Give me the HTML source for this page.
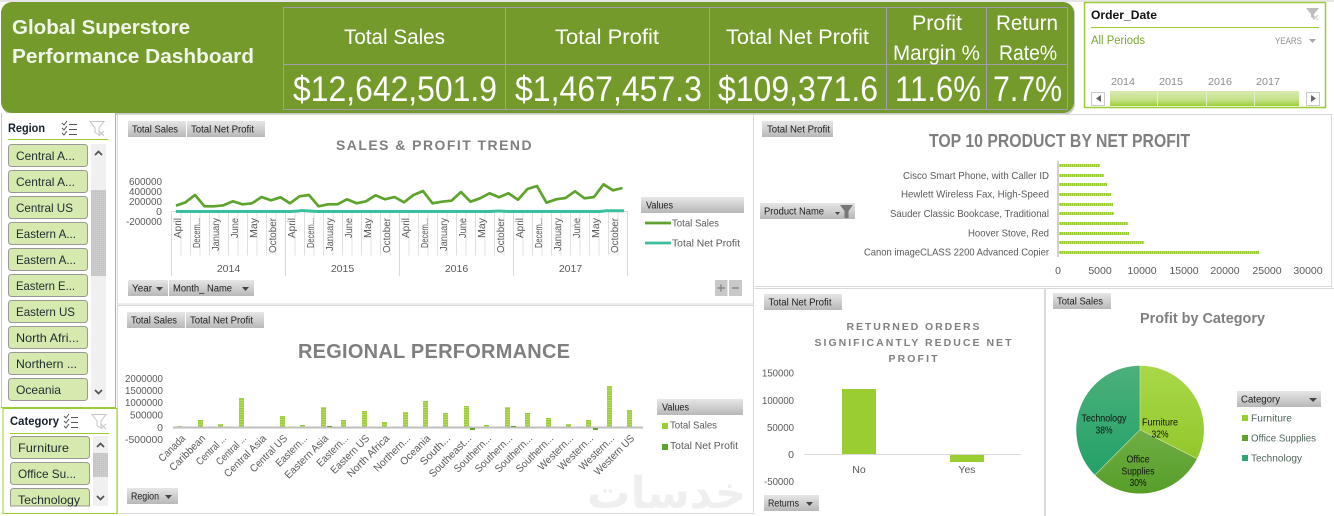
<!DOCTYPE html>
<html lang="en">
<head>
<meta charset="utf-8">
<title>Global Superstore Performance Dashboard</title>
<style>
html,body{margin:0;padding:0;background:#fff;width:1334px;height:516px;overflow:hidden}
svg{display:block;font-family:"Liberation Sans",sans-serif}
.tag{font-size:10px;fill:#1c1c1c}
.ax{font-size:10.5px;fill:#595959}
.sl{font-size:12px;fill:#1f2a30}
.kh{font-size:21px;fill:#fff}
.kv{font-size:35px;fill:#fff}
.ti{font-weight:bold;fill:#7f7f7f}
</style>
</head>
<body>
<svg width="1334" height="516" viewBox="0 0 1334 516" xmlns="http://www.w3.org/2000/svg">
<defs>
<linearGradient id="tg" x1="0" y1="0" x2="0" y2="1"><stop offset="0" stop-color="#e6e6e6"/><stop offset="1" stop-color="#b8b8b8"/></linearGradient>
<linearGradient id="tl" x1="0" y1="0" x2="0" y2="1"><stop offset="0" stop-color="#d8ebb0"/><stop offset="0.6" stop-color="#c4e18a"/><stop offset="1" stop-color="#9acd32"/></linearGradient>
<linearGradient id="pf" x1="0" y1="0" x2="0" y2="1"><stop offset="0" stop-color="#a8d848"/><stop offset="1" stop-color="#93c82c"/></linearGradient>
<linearGradient id="po" x1="0" y1="0" x2="0" y2="1"><stop offset="0" stop-color="#6fae45"/><stop offset="1" stop-color="#579e28"/></linearGradient>
<linearGradient id="pt" x1="0" y1="0" x2="0" y2="1"><stop offset="0" stop-color="#4cb07c"/><stop offset="1" stop-color="#23a167"/></linearGradient>
<pattern id="st" width="5" height="2.4" patternUnits="userSpaceOnUse"><rect width="5" height="2.4" fill="#bcdf72"/><rect width="5" height="1.4" fill="#98cb30"/></pattern>
<pattern id="vs" width="2" height="3" patternUnits="userSpaceOnUse"><rect width="2" height="3" fill="#c4e282"/><rect width="1.2" height="3" fill="#98cb30"/></pattern>
<pattern id="dt" width="2" height="2" patternUnits="userSpaceOnUse"><rect width="2" height="2" fill="#c6c6c6"/><rect width="1" height="1" fill="#d2d2d2"/></pattern>
</defs>

<rect x="0" y="0" width="1334" height="2" fill="#e6e6e6"/>

<!-- header -->
<rect x="2" y="3" width="1073" height="112" rx="11" fill="#c8c8c8"/>
<rect x="1" y="2" width="1073" height="111" rx="11" fill="#739a2a"/>
<text x="12" y="34" font-size="20.5" font-weight="bold" fill="#f2f5ea" textLength="178" lengthAdjust="spacingAndGlyphs">Global Superstore</text>
<text x="12" y="63" font-size="20.5" font-weight="bold" fill="#f2f5ea" textLength="242" lengthAdjust="spacingAndGlyphs">Performance Dashboard</text>
<g fill="none" stroke="#a29dab" stroke-width="1">
<rect x="283.5" y="7.5" width="784" height="102"/>
<path d="M283.5 64.5H1067.5M505.5 7.5V109.5M709.5 7.5V109.5M886.5 7.5V109.5M986.5 7.5V109.5"/>
</g>
<text class="kh" x="344" y="44" textLength="101" lengthAdjust="spacingAndGlyphs">Total Sales</text>
<text class="kh" x="555" y="44" textLength="104" lengthAdjust="spacingAndGlyphs">Total Profit</text>
<text class="kh" x="726" y="44" textLength="143" lengthAdjust="spacingAndGlyphs">Total Net Profit</text>
<text class="kh" x="912" y="30" textLength="50" lengthAdjust="spacingAndGlyphs">Profit</text>
<text class="kh" x="893" y="60" textLength="87" lengthAdjust="spacingAndGlyphs">Margin %</text>
<text class="kh" x="996" y="30" textLength="62" lengthAdjust="spacingAndGlyphs">Return</text>
<text class="kh" x="999" y="60" textLength="58" lengthAdjust="spacingAndGlyphs">Rate%</text>
<text class="kv" x="293" y="101" textLength="204" lengthAdjust="spacingAndGlyphs">$12,642,501.9</text>
<text class="kv" x="515" y="101" textLength="187" lengthAdjust="spacingAndGlyphs">$1,467,457.3</text>
<text class="kv" x="718" y="101" textLength="160" lengthAdjust="spacingAndGlyphs">$109,371.6</text>
<text class="kv" x="895" y="101" textLength="86" lengthAdjust="spacingAndGlyphs">11.6%</text>
<text class="kv" x="993" y="101" textLength="69" lengthAdjust="spacingAndGlyphs">7.7%</text>

<!-- timeline -->
<rect x="1084.5" y="2.5" width="241" height="105" fill="#fff" stroke="#9acd32" stroke-width="1.5"/>
<text x="1091" y="19" font-size="12" font-weight="bold" fill="#111" textLength="66" lengthAdjust="spacingAndGlyphs">Order_Date</text>
<path d="M1091 27.5H1319" stroke="#9acd32" stroke-width="1"/>
<text x="1091" y="44" font-size="11.5" fill="#7aa62c" textLength="54" lengthAdjust="spacingAndGlyphs">All Periods</text>
<text x="1275" y="44" font-size="9.5" fill="#8c8c8c" textLength="27" lengthAdjust="spacingAndGlyphs">YEARS</text>
<path d="M1309 39h7l-3.500 4z" fill="#a6a6a6"/>
<g fill="#bcbcbc"><path d="M1306 8h13l-5 6v5l-3-2v-3z"/></g>
<path d="M1313 15l5 5M1318 15l-5 5" stroke="#c8c8c8" stroke-width="1"/>
<g font-size="10.5" fill="#8c8c8c">
<text x="1111" y="85" textLength="24" lengthAdjust="spacingAndGlyphs">2014</text>
<text x="1159" y="85" textLength="24" lengthAdjust="spacingAndGlyphs">2015</text>
<text x="1208" y="85" textLength="24" lengthAdjust="spacingAndGlyphs">2016</text>
<text x="1256" y="85" textLength="24" lengthAdjust="spacingAndGlyphs">2017</text>
</g>
<rect x="1110" y="91" width="189" height="15" fill="url(#tl)"/>
<path d="M1157.500 91V106M1206.500 91V106M1254.500 91V106" stroke="#e4f0c8" stroke-width="1"/>
<rect x="1091.500" y="92.500" width="13" height="13" fill="#fff" stroke="#c8c8c8"/>
<path d="M1101 95v7l-5-3.500z" fill="#666"/>
<rect x="1306.500" y="92.500" width="13" height="13" fill="#fff" stroke="#c8c8c8"/>
<path d="M1311 95v7l5-3.500z" fill="#666"/>

<!-- panel borders -->
<g fill="none" stroke="#d9d9d9" stroke-width="1">
<rect x="117.500" y="114.500" width="636" height="189.500"/>
<rect x="117.500" y="305.500" width="636" height="208"/>
<path d="M754.500 114.500H1331.500V286.500H754.500"/>
<path d="M754.500 288.500H1044.500V516"/>
<path d="M1045.500 288.500H1334M1045.500 288.500V516"/>
</g>

<!-- Region slicer -->
<path d="M1.500 113V407.500H115.500V113" fill="#fff" stroke="#c8c8c8" stroke-width="1"/>
<path d="M1.500 407.500H115.500V113" fill="none" stroke="#9acd32" stroke-width="1"/>
<text x="8" y="132" font-size="12" font-weight="bold" fill="#16202c" textLength="37" lengthAdjust="spacingAndGlyphs">Region</text>
<g stroke="#555" stroke-width="1" fill="none">
<path d="M62 123l2 2 3-4M62 128l2 2 3-4M62 133l2 2 3-4"/>
<path d="M69 124.500H77M69 129.500H77M69 134.500H77"/>
</g>
<path d="M90 121.500H104L99 128V135L95 132.500V128Z" fill="#fff" stroke="#c4c4c4"/>
<path d="M99 131l5 5M104 131l-5 5" stroke="#c4c4c4"/>
<path d="M8 139.500H108" stroke="#9acd32" stroke-width="1"/>
<g fill="#d6e9ae" stroke="#989898" stroke-width="1">
<rect x="8.500" y="144.500" width="79" height="22" rx="3"/>
<rect x="8.500" y="170.500" width="79" height="22" rx="3"/>
<rect x="8.500" y="196.500" width="79" height="22" rx="3"/>
<rect x="8.500" y="222.500" width="79" height="22" rx="3"/>
<rect x="8.500" y="248.500" width="79" height="22" rx="3"/>
<rect x="8.500" y="274.500" width="79" height="22" rx="3"/>
<rect x="8.500" y="300.500" width="79" height="22" rx="3"/>
<rect x="8.500" y="326.500" width="79" height="22" rx="3"/>
<rect x="8.500" y="352.500" width="79" height="22" rx="3"/>
<rect x="8.500" y="378.500" width="79" height="22" rx="3"/>
</g>
<text class="sl" x="16" y="160" textLength="59" lengthAdjust="spacingAndGlyphs">Central A...</text>
<text class="sl" x="16" y="186" textLength="59" lengthAdjust="spacingAndGlyphs">Central A...</text>
<text class="sl" x="16" y="212" textLength="57" lengthAdjust="spacingAndGlyphs">Central US</text>
<text class="sl" x="16" y="238" textLength="60" lengthAdjust="spacingAndGlyphs">Eastern A...</text>
<text class="sl" x="16" y="264" textLength="60" lengthAdjust="spacingAndGlyphs">Eastern A...</text>
<text class="sl" x="16" y="290" textLength="59" lengthAdjust="spacingAndGlyphs">Eastern E...</text>
<text class="sl" x="16" y="316" textLength="59" lengthAdjust="spacingAndGlyphs">Eastern US</text>
<text class="sl" x="16" y="342" textLength="63" lengthAdjust="spacingAndGlyphs">North Afri...</text>
<text class="sl" x="16" y="368" textLength="61" lengthAdjust="spacingAndGlyphs">Northern ...</text>
<text class="sl" x="16" y="394" textLength="45" lengthAdjust="spacingAndGlyphs">Oceania</text>
<rect x="91" y="144" width="15" height="256" fill="#f0f0f0"/>
<rect x="91" y="190" width="15" height="86" fill="url(#dt)"/>
<path d="M95 155l3.500-3.500 3.500 3.500M95 390l3.500 3.500 3.500-3.500" fill="none" stroke="#555" stroke-width="1.800"/>

<!-- Category slicer -->
<rect x="3" y="408.500" width="114" height="105" fill="#fff" stroke="#9acd32" stroke-width="1"/>
<text x="10" y="425" font-size="12" font-weight="bold" fill="#16202c" textLength="49" lengthAdjust="spacingAndGlyphs">Category</text>
<g stroke="#555" stroke-width="1" fill="none">
<path d="M64 416l2 2 3-4M64 421l2 2 3-4M64 426l2 2 3-4"/>
<path d="M71 417.500H78M71 422.500H78M71 427.500H78"/>
</g>
<path d="M92 414.500H106L101 421V428L97 425.500V421Z" fill="#fff" stroke="#c4c4c4"/>
<path d="M101 424l5 5M106 424l-5 5" stroke="#c4c4c4"/>
<path d="M10 433.500H109" stroke="#9acd32" stroke-width="1"/>
<g fill="#d6e9ae" stroke="#989898" stroke-width="1">
<rect x="10.500" y="436.500" width="79" height="22" rx="3"/>
<rect x="10.500" y="462.500" width="79" height="22" rx="3"/>
<path d="M10.500 506V491.500a3 3 0 0 1 3-3H86.500a3 3 0 0 1 3 3V506Z"/>
</g>
<text class="sl" x="18" y="452" textLength="51" lengthAdjust="spacingAndGlyphs">Furniture</text>
<text class="sl" x="18" y="478" textLength="58" lengthAdjust="spacingAndGlyphs">Office Su...</text>
<text class="sl" x="18" y="504" textLength="62" lengthAdjust="spacingAndGlyphs">Technology</text>
<rect x="93" y="436" width="15" height="70" fill="#f0f0f0"/>
<rect x="93" y="453" width="15" height="24" fill="url(#dt)"/>
<path d="M97 447l3.500-3.500 3.500 3.500M97 496l3.500 3.500 3.500-3.500" fill="none" stroke="#555" stroke-width="1.800"/>

<!-- Trend chart -->
<rect x="128" y="121" width="58" height="16" fill="url(#tg)"/>
<rect x="187" y="121" width="78" height="16" fill="url(#tg)"/>
<text class="tag" x="132" y="132.500" textLength="46" lengthAdjust="spacingAndGlyphs">Total Sales</text>
<text class="tag" x="191" y="132.500" textLength="63" lengthAdjust="spacingAndGlyphs">Total Net Profit</text>
<text class="ti" x="336" y="150" font-size="14" letter-spacing="1.500" textLength="197" lengthAdjust="spacingAndGlyphs">SALES &amp; PROFIT TREND</text>
<g class="ax" text-anchor="end">
<text x="162" y="185" textLength="33" lengthAdjust="spacingAndGlyphs">600000</text>
<text x="162" y="195" textLength="33" lengthAdjust="spacingAndGlyphs">400000</text>
<text x="162" y="205" textLength="33" lengthAdjust="spacingAndGlyphs">200000</text>
<text x="162" y="215">0</text>
<text x="162" y="225" textLength="36" lengthAdjust="spacingAndGlyphs">-200000</text>
</g>
<line x1="171" x2="628" y1="233.500" y2="233.500" stroke="#e0e0e0" stroke-width="44" stroke-dasharray="1 8.500"/>
<path d="M171.500 212V276M285.500 212V276M399.500 212V276M513.500 212V276M627.500 212V276" stroke="#d9d9d9" fill="none"/>
<path d="M171 211.500H628" stroke="#d9d9d9"/>
<g class="ax" text-anchor="end">
<text transform="translate(181,218) rotate(-90)" textLength="20" lengthAdjust="spacingAndGlyphs">April</text>
<text transform="translate(200,218) rotate(-90)" textLength="30" lengthAdjust="spacingAndGlyphs">Decem...</text>
<text transform="translate(219,218) rotate(-90)" textLength="33" lengthAdjust="spacingAndGlyphs">January</text>
<text transform="translate(238,218) rotate(-90)" textLength="20" lengthAdjust="spacingAndGlyphs">June</text>
<text transform="translate(257,218) rotate(-90)" textLength="20" lengthAdjust="spacingAndGlyphs">May</text>
<text transform="translate(276,218) rotate(-90)" textLength="35" lengthAdjust="spacingAndGlyphs">October</text>
<text transform="translate(295,218) rotate(-90)" textLength="20" lengthAdjust="spacingAndGlyphs">April</text>
<text transform="translate(314,218) rotate(-90)" textLength="30" lengthAdjust="spacingAndGlyphs">Decem...</text>
<text transform="translate(333,218) rotate(-90)" textLength="33" lengthAdjust="spacingAndGlyphs">January</text>
<text transform="translate(352,218) rotate(-90)" textLength="20" lengthAdjust="spacingAndGlyphs">June</text>
<text transform="translate(371,218) rotate(-90)" textLength="20" lengthAdjust="spacingAndGlyphs">May</text>
<text transform="translate(390,218) rotate(-90)" textLength="35" lengthAdjust="spacingAndGlyphs">October</text>
<text transform="translate(409,218) rotate(-90)" textLength="20" lengthAdjust="spacingAndGlyphs">April</text>
<text transform="translate(428,218) rotate(-90)" textLength="30" lengthAdjust="spacingAndGlyphs">Decem...</text>
<text transform="translate(447,218) rotate(-90)" textLength="33" lengthAdjust="spacingAndGlyphs">January</text>
<text transform="translate(466,218) rotate(-90)" textLength="20" lengthAdjust="spacingAndGlyphs">June</text>
<text transform="translate(485,218) rotate(-90)" textLength="20" lengthAdjust="spacingAndGlyphs">May</text>
<text transform="translate(504,218) rotate(-90)" textLength="35" lengthAdjust="spacingAndGlyphs">October</text>
<text transform="translate(523,218) rotate(-90)" textLength="20" lengthAdjust="spacingAndGlyphs">April</text>
<text transform="translate(542,218) rotate(-90)" textLength="30" lengthAdjust="spacingAndGlyphs">Decem...</text>
<text transform="translate(561,218) rotate(-90)" textLength="33" lengthAdjust="spacingAndGlyphs">January</text>
<text transform="translate(580,218) rotate(-90)" textLength="20" lengthAdjust="spacingAndGlyphs">June</text>
<text transform="translate(599,218) rotate(-90)" textLength="20" lengthAdjust="spacingAndGlyphs">May</text>
<text transform="translate(618,218) rotate(-90)" textLength="35" lengthAdjust="spacingAndGlyphs">October</text>
</g>
<g class="ax" text-anchor="middle">
<text x="228.500" y="272">2014</text>
<text x="342.500" y="272">2015</text>
<text x="456.500" y="272">2016</text>
<text x="570.500" y="272">2017</text>
</g>
<polyline fill="none" stroke="#5ea32e" stroke-width="2.700" stroke-linejoin="round" points="176,205.700 185.500,202.300 195,195 204.500,206.300 214,206.300 223.500,205.300 233,201.300 242.500,204.300 252,203.300 261.500,197 271,200.300 280.500,197.300 290,203.300 299.500,196.300 309,195 318.500,206.300 328,204.300 337.500,204.300 347,199.300 356.500,203.300 366,201.300 375.500,195.300 385,199.300 394.500,197 404,202.300 413.500,195 423,191 432.500,203.300 442,201.700 451.500,200.700 461,192 470.500,201.700 480,198.300 489.500,193.300 499,197.300 508.500,193.300 518,199.700 527.500,189 537,186 546.500,202.700 556,199.300 565.500,198 575,191.300 584.500,198.300 594,197 603.500,184.300 613,190.300 622.500,188"/>
<polyline fill="none" stroke="#3cbf9f" stroke-width="3" points="176,211.500 290,211.500 299,211 301,210.500 309,211 318,211.500 490,211.500 499,211 508,211.500 600,211.500 606,210.800 624,210.800"/>
<rect x="641" y="197" width="103" height="16" fill="url(#tg)"/>
<text class="tag" x="646" y="208.500" textLength="27" lengthAdjust="spacingAndGlyphs">Values</text>
<path d="M645 223H671" stroke="#5ea32e" stroke-width="2.700"/>
<path d="M645 243H671" stroke="#3cbf9f" stroke-width="2.700"/>
<text class="ax" x="672" y="226.500" textLength="47" lengthAdjust="spacingAndGlyphs">Total Sales</text>
<text class="ax" x="672" y="246.500" textLength="68" lengthAdjust="spacingAndGlyphs">Total Net Profit</text>
<rect x="128" y="280" width="40" height="16" fill="url(#tg)"/>
<rect x="169" y="280" width="85" height="16" fill="url(#tg)"/>
<text class="tag" x="132" y="291.500" textLength="20" lengthAdjust="spacingAndGlyphs">Year</text>
<path d="M156 287h7l-3.500 4z" fill="#444"/>
<text class="tag" x="173" y="291.500" textLength="59" lengthAdjust="spacingAndGlyphs">Month_ Name</text>
<path d="M242 287h7l-3.500 4z" fill="#444"/>
<rect x="715" y="280" width="12.500" height="16" fill="#c8c8c8"/>
<rect x="729" y="280" width="13" height="16" fill="#c8c8c8"/>
<path d="M717.500 288H725M721 284.500V291.500M732 288H739" stroke="#888" stroke-width="1.500"/>

<!-- Regional chart -->
<rect x="127" y="312" width="58" height="16" fill="url(#tg)"/>
<rect x="186" y="312" width="78" height="16" fill="url(#tg)"/>
<text class="tag" x="131" y="323.500" textLength="46" lengthAdjust="spacingAndGlyphs">Total Sales</text>
<text class="tag" x="190" y="323.500" textLength="63" lengthAdjust="spacingAndGlyphs">Total Net Profit</text>
<text class="ti" x="298" y="358" font-size="20" textLength="272" lengthAdjust="spacing">REGIONAL PERFORMANCE</text>
<g class="ax" text-anchor="end">
<text x="163" y="382" textLength="38" lengthAdjust="spacingAndGlyphs">2000000</text>
<text x="163" y="394" textLength="38" lengthAdjust="spacingAndGlyphs">1500000</text>
<text x="163" y="406" textLength="38" lengthAdjust="spacingAndGlyphs">1000000</text>
<text x="163" y="418.500" textLength="33" lengthAdjust="spacingAndGlyphs">500000</text>
<text x="163" y="431">0</text>
<text x="163" y="443" textLength="38" lengthAdjust="spacingAndGlyphs">-500000</text>
</g>
<g fill="url(#st)">
<rect x="177" y="426" width="5" height="1"/>
<rect x="198" y="420" width="5" height="7"/>
<rect x="218" y="424" width="5" height="3"/>
<rect x="239" y="398" width="5" height="29"/>
<rect x="280" y="416" width="5" height="11"/>
<rect x="300" y="425" width="5" height="2"/>
<rect x="321" y="407" width="5" height="20"/>
<rect x="341" y="420" width="5" height="7"/>
<rect x="362" y="411" width="5" height="16"/>
<rect x="382" y="422" width="5" height="5"/>
<rect x="403" y="412" width="5" height="15"/>
<rect x="423" y="401" width="5" height="26"/>
<rect x="443" y="413" width="5" height="14"/>
<rect x="464" y="406" width="5" height="21"/>
<rect x="484" y="425" width="5" height="2"/>
<rect x="505" y="407" width="5" height="20"/>
<rect x="525" y="413" width="5" height="14"/>
<rect x="546" y="418" width="5" height="9"/>
<rect x="566" y="424" width="5" height="3"/>
<rect x="586" y="420" width="5" height="7"/>
<rect x="607" y="386" width="5" height="41"/>
<rect x="627" y="410" width="5" height="17"/>
</g>
<path d="M173 427.500H643" stroke="#bfbfbf" stroke-width="2"/>
<g fill="#5ea32e">
<rect x="327" y="426" width="5" height="1"/>
<rect x="511" y="426" width="5" height="1"/>
<rect x="470" y="428" width="5" height="2"/>
<rect x="593" y="428" width="5" height="2"/>
</g>
<g class="ax" text-anchor="end">
<text transform="translate(186,439) rotate(-45)" textLength="33" lengthAdjust="spacingAndGlyphs">Canada</text>
<text transform="translate(206,439) rotate(-45)" textLength="46" lengthAdjust="spacingAndGlyphs">Caribbean</text>
<text transform="translate(227,439) rotate(-45)" textLength="38" lengthAdjust="spacingAndGlyphs">Central ...</text>
<text transform="translate(247,439) rotate(-45)" textLength="38" lengthAdjust="spacingAndGlyphs">Central ...</text>
<text transform="translate(267,439) rotate(-45)" textLength="55" lengthAdjust="spacingAndGlyphs">Central Asia</text>
<text transform="translate(288,439) rotate(-45)" textLength="48" lengthAdjust="spacingAndGlyphs">Central US</text>
<text transform="translate(308,439) rotate(-45)" textLength="40" lengthAdjust="spacingAndGlyphs">Eastern...</text>
<text transform="translate(329,439) rotate(-45)" textLength="57" lengthAdjust="spacingAndGlyphs">Eastern Asia</text>
<text transform="translate(349,439) rotate(-45)" textLength="40" lengthAdjust="spacingAndGlyphs">Eastern...</text>
<text transform="translate(370,439) rotate(-45)" textLength="50" lengthAdjust="spacingAndGlyphs">Eastern US</text>
<text transform="translate(390,439) rotate(-45)" textLength="55" lengthAdjust="spacingAndGlyphs">North Africa</text>
<text transform="translate(411,439) rotate(-45)" textLength="47" lengthAdjust="spacingAndGlyphs">Northern...</text>
<text transform="translate(431,439) rotate(-45)" textLength="38" lengthAdjust="spacingAndGlyphs">Oceania</text>
<text transform="translate(451,439) rotate(-45)" textLength="38" lengthAdjust="spacingAndGlyphs">South...</text>
<text transform="translate(472,439) rotate(-45)" textLength="55" lengthAdjust="spacingAndGlyphs">Southeast...</text>
<text transform="translate(492,439) rotate(-45)" textLength="48" lengthAdjust="spacingAndGlyphs">Southern...</text>
<text transform="translate(513,439) rotate(-45)" textLength="48" lengthAdjust="spacingAndGlyphs">Southern...</text>
<text transform="translate(533,439) rotate(-45)" textLength="48" lengthAdjust="spacingAndGlyphs">Southern...</text>
<text transform="translate(554,439) rotate(-45)" textLength="48" lengthAdjust="spacingAndGlyphs">Southern...</text>
<text transform="translate(574,439) rotate(-45)" textLength="45" lengthAdjust="spacingAndGlyphs">Western...</text>
<text transform="translate(594,439) rotate(-45)" textLength="45" lengthAdjust="spacingAndGlyphs">Western...</text>
<text transform="translate(615,439) rotate(-45)" textLength="45" lengthAdjust="spacingAndGlyphs">Western...</text>
<text transform="translate(635,439) rotate(-45)" textLength="52" lengthAdjust="spacingAndGlyphs">Western US</text>
</g>
<rect x="657" y="399" width="86" height="16" fill="url(#tg)"/>
<text class="tag" x="662" y="410.500" textLength="27" lengthAdjust="spacingAndGlyphs">Values</text>
<rect x="662" y="423" width="6" height="6" fill="#9acd32"/>
<rect x="662" y="444" width="6" height="6" fill="#5ea32e"/>
<text class="ax" x="670" y="428.500" textLength="47" lengthAdjust="spacingAndGlyphs">Total Sales</text>
<text class="ax" x="670" y="449" textLength="68" lengthAdjust="spacingAndGlyphs">Total Net Profit</text>
<rect x="127" y="488" width="51" height="16" fill="url(#tg)"/>
<text class="tag" x="131" y="499.500" textLength="28" lengthAdjust="spacingAndGlyphs">Region</text>
<path d="M165 495h7l-3.500 4z" fill="#444"/>
<text x="587" y="508" font-family="'DejaVu Sans',sans-serif" font-size="44" font-weight="bold" fill="#efefef" direction="rtl" text-anchor="end" textLength="159" lengthAdjust="spacingAndGlyphs">خدسات</text>

<!-- Top 10 -->
<rect x="762" y="121" width="71" height="16" fill="url(#tg)"/>
<text class="tag" x="767" y="132.500" textLength="63" lengthAdjust="spacingAndGlyphs">Total Net Profit</text>
<text class="ti" x="929" y="147" font-size="18" textLength="261" lengthAdjust="spacingAndGlyphs">TOP 10 PRODUCT BY NET PROFIT</text>
<rect x="760" y="203" width="95" height="16" fill="url(#tg)"/>
<text class="tag" x="764" y="214.500" textLength="60" lengthAdjust="spacingAndGlyphs">Product Name</text>
<path d="M835 212h5l-2.500 3z" fill="#444"/>
<path d="M840 205h13l-4.500 6v7h-4v-7z" fill="#777"/>
<g class="ax" text-anchor="end">
<text x="1049" y="179" textLength="146" lengthAdjust="spacingAndGlyphs">Cisco Smart Phone, with Caller ID</text>
<text x="1049" y="197.500" textLength="148" lengthAdjust="spacingAndGlyphs">Hewlett Wireless Fax, High-Speed</text>
<text x="1049" y="217" textLength="159" lengthAdjust="spacingAndGlyphs">Sauder Classic Bookcase, Traditional</text>
<text x="1049" y="236.500" textLength="81" lengthAdjust="spacingAndGlyphs">Hoover Stove, Red</text>
<text x="1049" y="255.500" textLength="185" lengthAdjust="spacingAndGlyphs">Canon imageCLASS 2200 Advanced Copier</text>
</g>
<g fill="url(#vs)">
<rect x="1059" y="164" width="41" height="3"/>
<rect x="1059" y="174" width="45" height="3"/>
<rect x="1059" y="183" width="48" height="3"/>
<rect x="1059" y="193" width="52" height="3"/>
<rect x="1059" y="203" width="54" height="3"/>
<rect x="1059" y="212" width="55" height="3"/>
<rect x="1059" y="222" width="69" height="3"/>
<rect x="1059" y="232" width="70" height="3"/>
<rect x="1059" y="241" width="85" height="3"/>
<rect x="1059" y="251" width="200" height="3"/>
</g>
<path d="M1058 161V257" stroke="#bfbfbf" stroke-width="1.500"/>
<g class="ax" text-anchor="middle">
<text x="1058" y="274">0</text>
<text x="1100" y="274">5000</text>
<text x="1142" y="274">10000</text>
<text x="1184" y="274">15000</text>
<text x="1225" y="274">20000</text>
<text x="1267" y="274">25000</text>
<text x="1308" y="274">30000</text>
</g>

<!-- Returned orders -->
<rect x="764" y="294" width="78" height="16" fill="url(#tg)"/>
<text class="tag" x="768.500" y="305.500" textLength="63" lengthAdjust="spacingAndGlyphs">Total Net Profit</text>
<g class="ti" font-size="10.500" text-anchor="middle">
<text x="913" y="330" textLength="133" lengthAdjust="spacing">RETURNED ORDERS</text>
<text x="913" y="346" textLength="197" lengthAdjust="spacing">SIGNIFICANTLY REDUCE NET</text>
<text x="913" y="362" textLength="49" lengthAdjust="spacing">PROFIT</text>
</g>
<g class="ax" text-anchor="end" font-size="11">
<text x="794" y="376.500" textLength="32" lengthAdjust="spacingAndGlyphs">150000</text>
<text x="794" y="404" textLength="32" lengthAdjust="spacingAndGlyphs">100000</text>
<text x="794" y="431" textLength="27" lengthAdjust="spacingAndGlyphs">50000</text>
<text x="794" y="458">0</text>
<text x="794" y="485" textLength="30" lengthAdjust="spacingAndGlyphs">-50000</text>
</g>
<path d="M804 454.500H1021" stroke="#d9d9d9"/>
<rect x="842" y="389" width="34" height="65" fill="#9acd32"/>
<rect x="950" y="455" width="34" height="7" fill="#9acd32"/>
<text class="ax" x="859" y="473" text-anchor="middle" font-size="11">No</text>
<text class="ax" x="967" y="473" text-anchor="middle" font-size="11">Yes</text>
<rect x="764" y="495" width="55" height="16" fill="url(#tg)"/>
<text class="tag" x="768" y="506.500" textLength="31" lengthAdjust="spacingAndGlyphs">Returns</text>
<path d="M806 502h7l-3.500 4z" fill="#444"/>

<!-- Pie -->
<rect x="1053" y="293" width="58" height="16" fill="url(#tg)"/>
<text class="tag" x="1057" y="304.500" textLength="46" lengthAdjust="spacingAndGlyphs">Total Sales</text>
<text class="ti" x="1140" y="323" font-size="14.500" textLength="125" lengthAdjust="spacingAndGlyphs">Profit by Category</text>
<path d="M1140 429.700V365.700A64 64 0 0 1 1197 458.700Z" fill="url(#pf)"/>
<path d="M1140 429.700L1197 458.700A64 64 0 0 1 1095 475Z" fill="url(#po)"/>
<path d="M1140 429.700L1095 475A64 64 0 0 1 1140 365.700Z" fill="url(#pt)"/>
<path d="M1197 458.700L1140 429.700 1095 475M1140 429.700V365.700" fill="none" stroke="#cfe6a8" stroke-width="0.600"/>
<g font-size="10" fill="#111" text-anchor="middle">
<text x="1160" y="425.500" textLength="36" lengthAdjust="spacingAndGlyphs">Furniture</text>
<text x="1160" y="437.500" textLength="17" lengthAdjust="spacingAndGlyphs">32%</text>
<text x="1138" y="462.500" textLength="23" lengthAdjust="spacingAndGlyphs">Office</text>
<text x="1138" y="474.500" textLength="33" lengthAdjust="spacingAndGlyphs">Supplies</text>
<text x="1138" y="486" textLength="17" lengthAdjust="spacingAndGlyphs">30%</text>
<text x="1104" y="421.500" textLength="45" lengthAdjust="spacingAndGlyphs">Technology</text>
<text x="1104" y="433.500" textLength="17" lengthAdjust="spacingAndGlyphs">38%</text>
</g>
<rect x="1237" y="391" width="84" height="16" fill="url(#tg)"/>
<text class="tag" x="1241" y="402.500" textLength="39" lengthAdjust="spacingAndGlyphs">Category</text>
<path d="M1309 398h8l-4 4z" fill="#444"/>
<rect x="1242" y="415" width="6" height="6" fill="#9acd32"/>
<rect x="1242" y="435" width="6" height="6" fill="#5ea32e"/>
<rect x="1242" y="455" width="6" height="6" fill="#2fa572"/>
<g class="ax" style="fill:#4f6659">
<text x="1251" y="421.500" textLength="41" lengthAdjust="spacingAndGlyphs">Furniture</text>
<text x="1251" y="441.500" textLength="65" lengthAdjust="spacingAndGlyphs">Office Supplies</text>
<text x="1251" y="461.500" textLength="51" lengthAdjust="spacingAndGlyphs">Technology</text>
</g>
</svg>
</body>
</html>
